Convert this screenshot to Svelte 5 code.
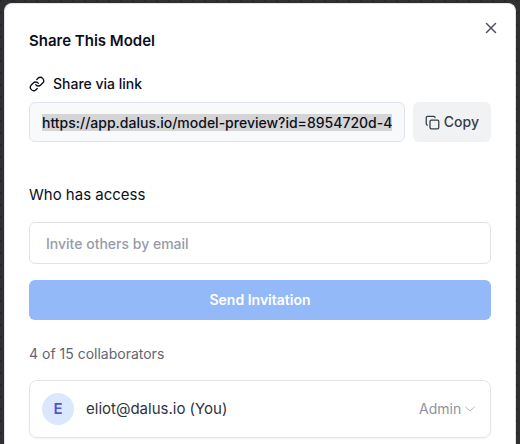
<script>
    import { onMount } from 'svelte';

    let link = 'https://app.dalus.io/model-preview?id=8954720d-42c1-4f7e-9a36-d1b7e05c8f24';
    let email = '';
    let seats = 15;
    let used = 4;
    let linkInput;
    let collaborators = [
        {email: 'eliot@dalus.io', you: true, role: 'Admin'}
    ];

    function selectLink(){
        linkInput.focus();
        linkInput.setSelectionRange(0, link.length);
        linkInput.scrollLeft = 0;
    }
    function copyLink(){
        selectLink();
        navigator.clipboard?.writeText(link);
    }

    onMount(selectLink);
</script>

<main>
    <div class="dialog" role="dialog" aria-labelledby="title">
        <header>
            <h1 id="title">Share This Model</h1>
            <button class="close" type="button" aria-label="Close">
                <svg width="18" height="18" viewBox="0 0 24 24"><path d="M18 6 6 18M6 6l12 12" /></svg>
            </button>
        </header>

        <section class="share">
            <label for="link">
                <svg width="16" height="16" viewBox="0 0 24 24">
                    <path d="M10 13a5 5 0 0 0 7.54.54l3-3a5 5 0 0 0-7.07-7.07l-1.72 1.71" />
                    <path d="M14 11a5 5 0 0 0-7.54-.54l-3 3a5 5 0 0 0 7.07 7.07l1.71-1.71" />
                </svg>
                Share via link
            </label>
            <div class="row">
                <input id="link" class="link" type="text" readonly value={link} bind:this={linkInput}>
                <button class="copy" type="button" on:click={copyLink}>
                    <svg width="15" height="15" viewBox="0 0 24 24">
                        <rect x="8" y="8" width="14" height="14" rx="2" />
                        <path d="M4 16c-1.100 0-2-.9-2-2V4c0-1.100.9-2 2-2h10c1.100 0 2 .9 2 2" />
                    </svg>
                    Copy
                </button>
            </div>
        </section>

        <section class="access">
            <h2>Who has access</h2>
            <input class="email" type="email" placeholder="Invite others by email" aria-label="Invite others by email" bind:value={email}>
            <button class="send" type="button" disabled={!email}>Send Invitation</button>
        </section>

        <section class="people">
            <p>{used} of {seats} collaborators</p>
            {#each collaborators as person}
                <div class="person">
                    <span class="avatar">{person.email[0].toUpperCase()}</span>
                    <span class="name">{person.email}{person.you ? ' (You)' : ''}</span>
                    <div class="role">
                        <select aria-label="Role" bind:value={person.role} disabled={person.you}>
                            <option>Admin</option>
                        </select>
                        <svg width="12" height="12" viewBox="0 0 24 24"><path d="m3 8 9 8 9-8" /></svg>
                    </div>
                </div>
            {/each}
        </section>
    </div>
</main>

<style>
    :global(body){
        margin: 0;
        background-color: #303030;
    }
    main{
        box-sizing: border-box;
        display: flex;
        justify-content: center;
        min-height: 100vh;
        padding: 3px 4px 0;
        background-color: #303030;
        background-image: radial-gradient(circle at 1px 1px, #272727 1px, transparent 1px);
        background-size: 12px 12px;
        font-family: Inter, sans-serif;
        font-size: 14px;
        line-height: 20px;
        color: #0b0f1c;
    }
    .dialog{
        box-sizing: border-box;
        width: 100%;
        max-width: 512px;
        padding: 24px 24px 6px;
        border: 1px solid #e2e4f0;
        border-bottom: 0;
        border-radius: 8px 8px 0 0;
        background-color: white;
    }
    header{
        position: relative;
    }
    h1, h2, p{
        margin: 0;
    }
    h1{
        font-size: 15px;
        line-height: 26px;
        font-weight: 600;
    }
    h2{
        margin-bottom: 14px;
        font-size: 15px;
        line-height: 26px;
        font-weight: 400;
    }
    svg{
        flex: none;
        fill: none;
        stroke: currentColor;
        stroke-width: 2;
        stroke-linecap: round;
        stroke-linejoin: round;
    }
    button, input, select{
        box-sizing: border-box;
        font-family: inherit;
        font-size: 14px;
        line-height: 20px;
        font-weight: 500;
    }
    button{
        border: 0;
        border-radius: 6px;
        cursor: pointer;
    }
    input{
        min-width: 0;
        border: 1px solid #e1e3ec;
        border-radius: 6px;
        outline: none;
        color: inherit;
    }
    .close{
        position: absolute;
        top: -9px;
        right: -9px;
        display: flex;
        padding: 0;
        background: none;
        color: #4d525c;
    }
    .share{
        margin-top: 20px;
    }
    label{
        display: flex;
        align-items: center;
        gap: 8px;
        font-weight: 500;
    }
    .row{
        display: flex;
        gap: 8px;
        margin-top: 8px;
    }
    .link{
        flex: 1;
        height: 40px;
        padding: 0 12px;
        background-color: #f8f9fb;
    }
    .link::selection{
        background-color: rgba(212, 213, 213, 0.99);
    }
    .copy{
        display: flex;
        align-items: center;
        gap: 4px;
        height: 40px;
        padding: 0 12px;
        background-color: #f1f2f4;
        color: #353c4b;
    }
    .access{
        display: flex;
        flex-direction: column;
        margin-top: 40px;
    }
    .email{
        height: 42px;
        padding: 0 16px;
        background-color: white;
    }
    .email::placeholder{
        color: #969ba7;
        opacity: 1;
    }
    .send{
        height: 40px;
        margin-top: 16px;
        background-color: #3b82f6;
        color: white;
        font-weight: 600;
    }
    .send:disabled{
        background-color: #94b9f9;
        cursor: default;
    }
    .people{
        display: flex;
        flex-direction: column;
        gap: 16px;
        margin-top: 24px;
    }
    p{
        color: #5f6673;
    }
    .person{
        display: flex;
        align-items: center;
        gap: 12px;
        padding: 12px;
        border: 1px solid #e3e4ec;
        border-radius: 8px;
        box-shadow: 0 1px 2px rgba(0, 0, 0, 0.05);
    }
    .avatar{
        display: flex;
        align-items: center;
        justify-content: center;
        width: 32px;
        height: 32px;
        border-radius: 50%;
        background-color: #dbe7fd;
        color: #4a56e0;
        font-size: 15px;
        font-weight: 600;
    }
    .name{
        flex: 1;
        font-size: 15px;
        color: #2c3442;
    }
    .role{
        display: flex;
        align-items: center;
        gap: 2px;
        padding-right: 2px;
        color: #b4b7bc;
    }
    select{
        appearance: none;
        padding: 0;
        border: 0;
        background: none;
        color: #8f939b;
        font-weight: 400;
        opacity: 1;
    }
</style>
